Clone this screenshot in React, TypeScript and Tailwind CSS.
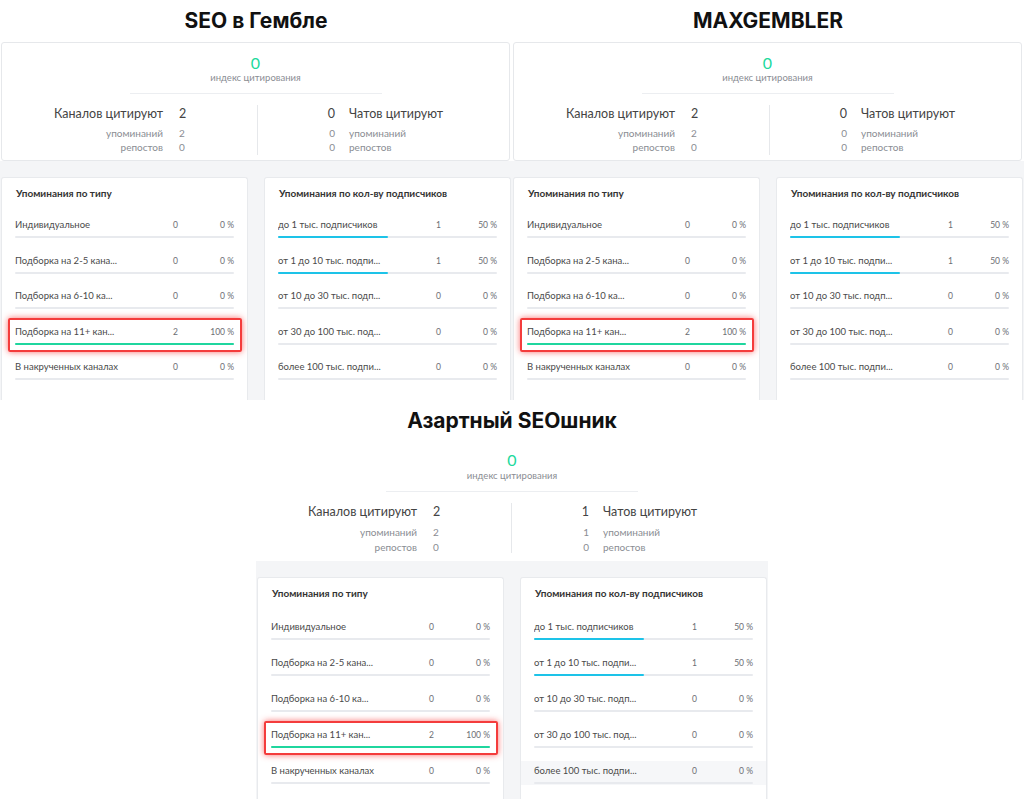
import React from 'react';

type Row = { label: string; count: number; pct: number };

interface PanelProps {
  title: string;
  channels: { total: number; mentions: number; reposts: number };
  chats: { total: number; mentions: number; reposts: number };
  bordered?: boolean;
  hoverLast?: boolean;
}

const typeRows: Row[] = [
  { label: 'Индивидуальное', count: 0, pct: 0 },
  { label: 'Подборка на 2-5 кана...', count: 0, pct: 0 },
  { label: 'Подборка на 6-10 ка...', count: 0, pct: 0 },
  { label: 'Подборка на 11+ кан...', count: 2, pct: 100 },
  { label: 'В накрученных каналах', count: 0, pct: 0 },
];

const subsRows: Row[] = [
  { label: 'до 1 тыс. подписчиков', count: 1, pct: 50 },
  { label: 'от 1 до 10 тыс. подпи...', count: 1, pct: 50 },
  { label: 'от 10 до 30 тыс. подп...', count: 0, pct: 0 },
  { label: 'от 30 до 100 тыс. под...', count: 0, pct: 0 },
  { label: 'более 100 тыс. подпи...', count: 0, pct: 0 },
];

function StatsBlock({ channels, chats, bordered }: Pick<PanelProps, 'channels' | 'chats' | 'bordered'>) {
  // the plain (borderless) variant is a slightly taller screenshot
  return (
    <div
      className={
        bordered
          ? 'ml-[1px] w-[509px] h-[119px] border border-[#e6e8eb] rounded-[3px] bg-white'
          : 'w-[512px] h-[119px] bg-white'
      }
    >
      <div className={bordered ? 'pt-[11px] flex flex-col items-center' : 'pt-[9px] flex flex-col items-center'}>
        <div className="text-[16px] leading-[18px] text-[#20d99c]">0</div>
        <div className={bordered ? 'text-[9.5px] leading-[12px] text-[#8a8d93]' : 'mt-[1px] text-[9.5px] leading-[12px] text-[#8a8d93]'}>
          индекс цитирования
        </div>
        <div className="mt-[9px] w-[252px] h-px bg-[#eceef1]" />
      </div>
      <div className={bordered ? 'mt-[11px] flex' : 'mt-[11px] flex'}>
        {/* Channels */}
        <div className="w-[255px] pr-[66px] grid grid-cols-[1fr_12px] gap-x-[16px] text-right text-[#8a8d93]">
          <div className="text-[12.5px] leading-[18px] text-[#444]">Каналов цитируют</div>
          <div className="text-[12.5px] leading-[18px] text-[#444] text-left">{channels.total}</div>
          <div className={bordered ? 'mt-[2px] text-[10px] leading-[14px]' : 'mt-[4px] text-[10px] leading-[15px]'}>упоминаний</div>
          <div className={bordered ? 'mt-[2px] text-[10px] leading-[14px] text-left' : 'mt-[4px] text-[10px] leading-[15px] text-left'}>
            {channels.mentions}
          </div>
          <div className={bordered ? 'text-[10px] leading-[14px]' : 'text-[10px] leading-[15px]'}>репостов</div>
          <div className={bordered ? 'text-[10px] leading-[14px] text-left' : 'text-[10px] leading-[15px] text-left'}>
            {channels.reposts}
          </div>
        </div>
        <div className="w-px h-[50px] bg-[#e6e8eb]" />
        {/* Chats */}
        <div className="flex-1 pl-[65px] grid grid-cols-[12px_1fr] gap-x-[14px] text-[#8a8d93]">
          <div className="text-[12.5px] leading-[18px] text-[#444] text-right">{chats.total}</div>
          <div className="text-[12.5px] leading-[18px] text-[#444]">Чатов цитируют</div>
          <div className={bordered ? 'mt-[2px] text-[10px] leading-[14px] text-right' : 'mt-[4px] text-[10px] leading-[15px] text-right'}>
            {chats.mentions}
          </div>
          <div className={bordered ? 'mt-[2px] text-[10px] leading-[14px]' : 'mt-[4px] text-[10px] leading-[15px]'}>упоминаний</div>
          <div className={bordered ? 'text-[10px] leading-[14px] text-right' : 'text-[10px] leading-[15px] text-right'}>
            {chats.reposts}
          </div>
          <div className={bordered ? 'text-[10px] leading-[14px]' : 'text-[10px] leading-[15px]'}>репостов</div>
        </div>
      </div>
    </div>
  );
}

function StatCard({
  title,
  rows,
  barColor,
  highlight,
  hoverLast,
  tall,
}: {
  title: string;
  rows: Row[];
  barColor: string;
  highlight?: number;
  hoverLast?: boolean;
  tall?: boolean;
}) {
  return (
    <div className="w-[247px] h-[240px] bg-white border border-[#e8eaed] border-b-0 rounded-t-[3px] overflow-hidden">
      <div className="pt-[8px] px-[14px] text-[10px] leading-[14px] font-bold text-[#333]">{title}</div>
      <div className={tall ? 'mt-[5px]' : 'mt-[3px]'}>
        {rows.map((row, i) => (
          <div key={i} className={tall ? 'h-[36px] pt-[12px]' : 'h-[35.5px] pt-[12px]'}>
            <div
              className={
                hoverLast && i === rows.length - 1
                  ? 'px-[13px] pt-[3px] pb-[1px] bg-[#f6f7f9]'
                  : 'px-[13px] pt-[3px] pb-[1px]'
              }
            >
              <div className="relative">
                <div className="grid grid-cols-[158px_1fr_auto] items-center leading-[14px]">
                  <span className="text-[9.5px] text-[#4a4a4a] whitespace-nowrap overflow-hidden">{row.label}</span>
                  <span className="text-[8.5px] text-[#6b6e73]">{row.count}</span>
                  <span className="text-[8.5px] text-[#6b6e73]">{row.pct} %</span>
                </div>
                <div className="mt-[4px] h-[2px] bg-[#e8eaee] rounded-full">
                  <div className={`h-[2px] rounded-full ${barColor}`} style={{ width: `${row.pct}%` }} />
                </div>
                {highlight === i && (
                  <span className="absolute -top-[7px] -bottom-[7px] -left-[7px] -right-[8px] border-2 border-[#f43c3c] rounded-[2px] shadow-[0_0_6px_rgba(250,50,50,0.7)]" />
                )}
              </div>
            </div>
          </div>
        ))}
      </div>
    </div>
  );
}

function Panel({ title, channels, chats, bordered, hoverLast }: PanelProps) {
  return (
    <div className="w-[512px]">
      <h2 className="h-[42px] flex items-center justify-center text-[21px] font-bold text-[#111] font-['Inter',sans-serif]">
        {title}
      </h2>
      <StatsBlock channels={channels} chats={chats} bordered={bordered} />
      <div className="h-[239px] bg-[#f4f5f7] pt-[16px] pl-[1px] flex gap-[16px] overflow-hidden">
        <StatCard title="Упоминания по типу" rows={typeRows} barColor="bg-[#1fd69e]" highlight={3} tall={!bordered} />
        <StatCard
          title="Упоминания по кол-ву подписчиков"
          rows={subsRows}
          barColor="bg-[#1dc3e8]"
          hoverLast={hoverLast}
          tall={!bordered}
        />
      </div>
    </div>
  );
}

export default function App() {
  const channels = { total: 2, mentions: 2, reposts: 0 };
  return (
    <div className="w-[1024px] h-[799px] bg-white overflow-hidden font-['Lato',sans-serif]">
      <div className="flex">
        <Panel title="SEO в Гембле" channels={channels} chats={{ total: 0, mentions: 0, reposts: 0 }} bordered />
        <Panel title="MAXGEMBLER" channels={channels} chats={{ total: 0, mentions: 0, reposts: 0 }} bordered />
      </div>
      <div className="flex justify-center">
        <Panel
          title="Азартный SEOшник"
          channels={channels}
          chats={{ total: 1, mentions: 1, reposts: 0 }}
          hoverLast
        />
      </div>
    </div>
  );
}
